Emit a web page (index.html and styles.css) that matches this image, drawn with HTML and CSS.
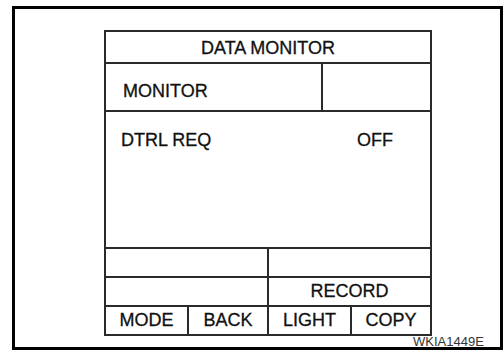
FILE: index.html
```html
<!DOCTYPE html>
<html lang="en">

<head>
    <meta charset="UTF-8">
    <meta name="viewport" content="width=device-width, initial-scale=1.0">
    <title>Data Monitor</title>
    <link rel="stylesheet" href="styles.css">
</head>

<body>
    <div id="frame">
        <div id="screen">
            <div class="row head">DATA MONITOR</div>
            <div class="row mon">
                <div class="cell mon-name">MONITOR</div>
                <div class="cell"></div>
            </div>
            <div class="row items">
                <div class="item">
                    <span>DTRL REQ</span>
                    <span>OFF</span>
                </div>
            </div>
            <div class="row half">
                <div class="cell"></div>
                <div class="cell"></div>
            </div>
            <div class="row half">
                <div class="cell"></div>
                <div class="cell">RECORD</div>
            </div>
            <div class="row btns">
                <div class="cell">MODE</div>
                <div class="cell">BACK</div>
                <div class="cell">LIGHT</div>
                <div class="cell">COPY</div>
            </div>
        </div>
        <p id="code">WKIA1449E</p>
    </div>
</body>

</html>
```

FILE: styles.css
```css
* {
    margin: 0;
    padding: 0;
    box-sizing: border-box;
}

body {
    background: #fff;
    font-family: "Liberation Sans", Arial, sans-serif;
    color: #111;
}

#frame {
    margin: 6px 0 0 12px;
    width: 491px;
    height: 344px;
    border: 3px solid #000;
    padding: 21px 0 0 89px;
}

#screen {
    width: 328px;
    height: 306px;
    border: 2px solid #2a2a2a;
    font-size: 18px;
    -webkit-text-stroke: 0.3px #111;
}

.row {
    display: grid;
    border-bottom: 2px solid #2a2a2a;
}

.row:last-child {
    border-bottom: none;
}

.cell {
    border-right: 2px solid #2a2a2a;
    text-align: center;
}

.cell:last-child {
    border-right: none;
}

.head {
    height: 32px;
    line-height: 30px;
    padding-top: 1px;
    text-align: center;
}

.mon {
    height: 48px;
    grid-template-columns: 217px 1fr;
}

.mon-name {
    text-align: left;
    padding: 18px 0 0 17px;
    line-height: 18px;
}

.items {
    height: 137px;
    padding: 19px 37px 0 15px;
}

.item {
    display: flex;
    justify-content: space-between;
    line-height: 18px;
}

.half {
    height: 29px;
    grid-template-columns: 163px 1fr;
}

.half .cell {
    line-height: 27px;
}

.btns {
    height: 27px;
    grid-template-columns: 83px 80px 83px 1fr;
}

.btns .cell {
    line-height: 27px;
}

#code {
    margin: -1px 0 0 309px;
    font-size: 13px;
    line-height: 13px;
    color: #333;
}
```
